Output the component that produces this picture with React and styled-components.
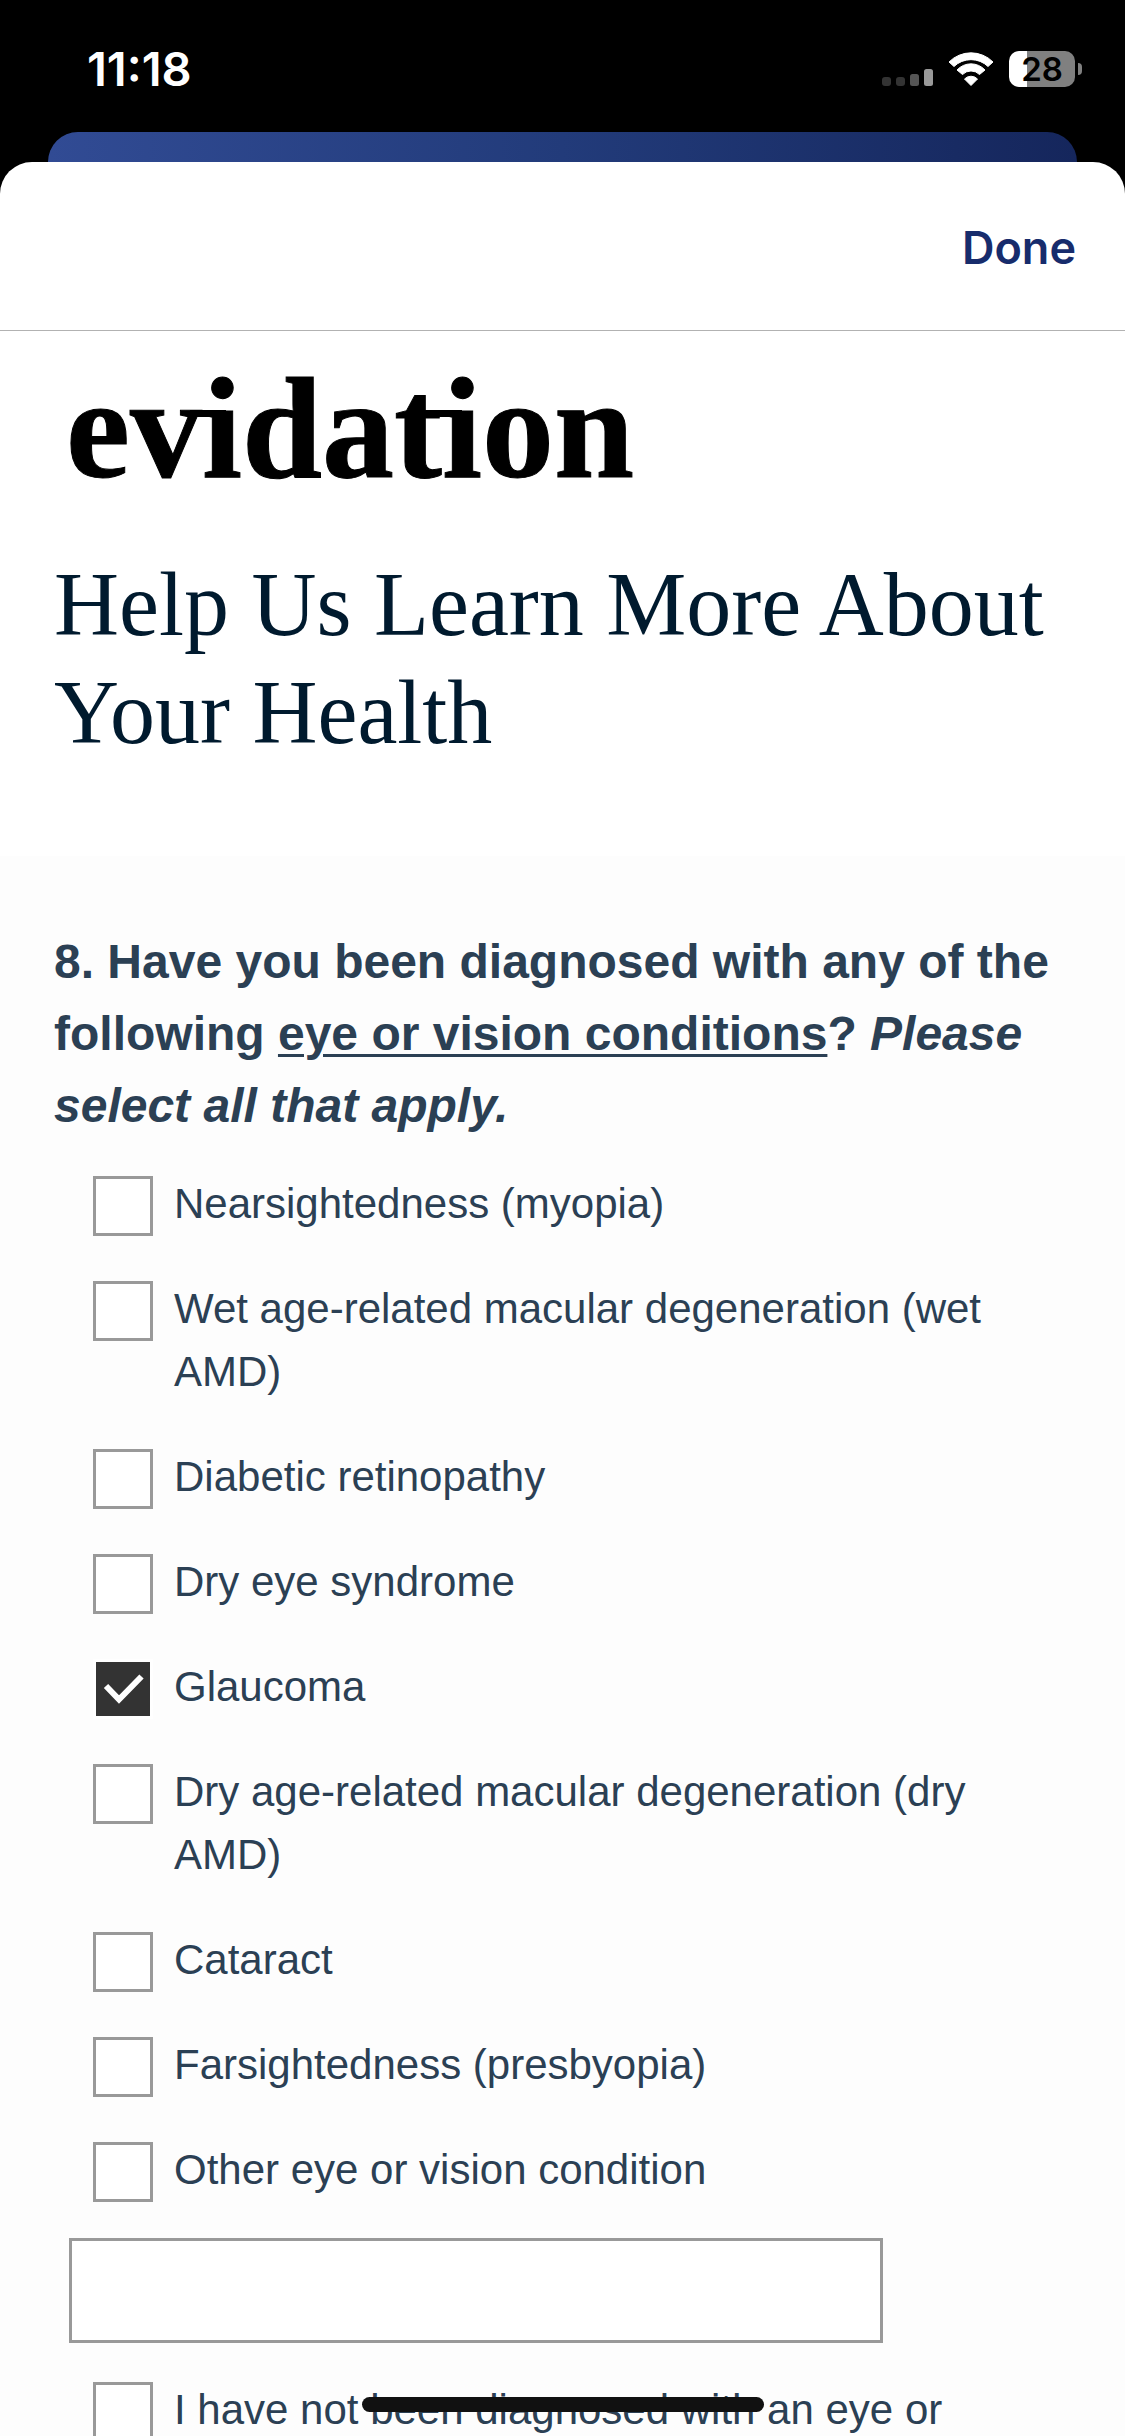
import React, { useState } from "react";
import styled, { createGlobalStyle } from "styled-components";

const SANS = '"Liberation Sans", Arial, sans-serif';
const SERIF = '"Liberation Serif", "Times New Roman", serif';
const SYSTEM = 'Inter, "Liberation Sans", sans-serif';

const GlobalStyle = createGlobalStyle`
  *, *::before, *::after { box-sizing: border-box; }
  body { margin: 0; background: #000; }
`;

const Screen = styled.div`
  position: relative;
  display: flex;
  flex-direction: column;
  height: 100vh;
  overflow: hidden;
  background: #000;
`;

const StatusBar = styled.div`
  display: flex;
  align-items: center;
  justify-content: space-between;
  flex: none;
  height: 132px;
  padding: 6px 43px 0 87px;
  color: #fff;
  font-family: ${SYSTEM};
`;

const Clock = styled.time`
  font-size: 47px;
  line-height: 54px;
  font-weight: 600;
`;

const StatusIcons = styled.div`
  display: flex;
  align-items: center;
  gap: 15px;
`;

const Battery = styled.div`
  display: flex;
  align-items: center;
  gap: 3px;
`;

const BatteryBody = styled.div`
  width: 66px;
  height: 36px;
  border-radius: 10px;
  background: linear-gradient(to right, #fff ${(p) => p.$level}%, #808080 ${(p) => p.$level}%);
  color: #000;
  font-size: 33px;
  line-height: 36px;
  font-weight: 600;
  text-align: center;
`;

const BatteryCap = styled.div`
  width: 4px;
  height: 12px;
  border-radius: 0 4px 4px 0;
  background: #808080;
`;

const BackCard = styled.div`
  flex: none;
  height: 62px;
  margin: 0 48px -32px;
  border-radius: 30px 30px 0 0;
  background: linear-gradient(to right, #314b94, #223b7a 50%, #15265c);
`;

const Sheet = styled.div`
  position: relative;
  display: flex;
  flex-direction: column;
  flex: 1;
  min-height: 0;
  border-radius: 32px 32px 0 0;
  background: #fff;
  overflow: hidden;
`;

const Toolbar = styled.div`
  display: flex;
  align-items: center;
  justify-content: flex-end;
  flex: none;
  height: 169px;
  padding: 4px 49px 0;
  border-bottom: 1px solid #b2b2b2;
`;

const DoneButton = styled.button`
  padding: 0;
  border: 0;
  background: none;
  color: #172c6c;
  font: 600 45px/60px ${SYSTEM};
`;

const Survey = styled.main`
  flex: 1;
  min-height: 0;
  overflow: hidden auto;
  scrollbar-width: none;
`;

const Intro = styled.header`
  padding: 16px 54px 89px;
`;

const Logo = styled.svg`
  display: block;
  margin: 0 0 40px 12px;
  font-family: ${SERIF};
  font-size: 144px;
  font-weight: 700;
`;

const Title = styled.h1`
  margin: 0;
  color: #001a2e;
  font: 400 90px/108px ${SERIF};
`;

const Form = styled.form`
  padding: 70px 54px;
  background: #fdfdfd;
  color: #2b4054;
  font-family: ${SANS};
`;

const Question = styled.fieldset`
  min-width: 0;
  margin: 0;
  padding: 0;
  border: 0;
`;

const Prompt = styled.legend`
  padding: 0;
  margin-bottom: 30px;
  font-size: 48px;
  line-height: 72px;
  font-weight: 700;

  u {
    text-decoration-thickness: 3px;
    text-underline-offset: 4px;
  }
`;

const Options = styled.div`
  display: flex;
  flex-direction: column;
  gap: 42px;
  padding: 0 39px;
`;

const OptionRow = styled.label`
  display: flex;
  align-items: flex-start;
  gap: 21px;
  font-size: 42px;
  line-height: 63px;
`;

const BoxCell = styled.span`
  display: grid;
  flex: none;
  width: 60px;
  height: 60px;
  margin: 4px 0 -1px;

  > * { grid-area: 1 / 1; }
`;

const Box = styled.input`
  appearance: none;
  width: 60px;
  height: 60px;
  margin: 0;
  border: 3px solid #999;
  background: #fff;

  &:checked {
    border-color: #fff;
    background: #333;
  }
`;

const Tick = styled.svg`
  pointer-events: none;
`;

const OtherInput = styled.input`
  display: block;
  width: 80%;
  height: 105px;
  margin: 37px 15px 35px;
  padding: 0 24px;
  border: 3px solid #999;
  border-radius: 0;
  background: #fff;
  color: inherit;
  font: 42px/63px ${SANS};
`;

const HomeIndicator = styled.div`
  position: absolute;
  left: 50%;
  bottom: 24px;
  width: 402px;
  height: 15px;
  margin-left: -201px;
  border-radius: 8px;
  background: #111;
`;

const CONDITIONS = [
  "Nearsightedness (myopia)",
  "Wet age-related macular degeneration (wet AMD)",
  "Diabetic retinopathy",
  "Dry eye syndrome",
  "Glaucoma",
  "Dry age-related macular degeneration (dry AMD)",
  "Cataract",
  "Farsightedness (presbyopia)",
  "Other eye or vision condition",
];
const NONE = "I have not been diagnosed with an eye or";

function Option({ label, checked, onToggle }) {
  return (
    <OptionRow>
      <BoxCell>
        <Box type="checkbox" checked={checked} onChange={() => onToggle(label)} />
        {checked && (
          <Tick width="60" height="60" viewBox="0 0 60 60" fill="none" aria-hidden="true">
            <path d="M13 27 L26 40.5 L48.5 17.5" stroke="#fff" strokeWidth="6" />
          </Tick>
        )}
      </BoxCell>
      <span>{label}</span>
    </OptionRow>
  );
}

function SignalIcon() {
  return (
    <svg width="51" height="34" viewBox="0 0 51 34" aria-hidden="true">
      <rect x="0" y="25" width="9" height="9" rx="3" fill="#333" />
      <rect x="14" y="25" width="9" height="9" rx="3" fill="#333" />
      <rect x="28" y="22" width="9" height="12" rx="2.5" fill="#555" />
      <rect x="42" y="17" width="9" height="17" rx="2.5" fill="#999" />
    </svg>
  );
}

function WifiIcon() {
  return (
    <svg width="46" height="34" viewBox="0 0 46 34" fill="#fff" stroke="#fff" strokeWidth="1" strokeLinejoin="round" aria-hidden="true">
      <path d="M1 10 A31 31 0 0 1 45 10 L40 14.5 A24.5 24.5 0 0 0 6 14.5 Z" />
      <path d="M9 18 A19 19 0 0 1 37 18 L31.5 22.5 A12 12 0 0 0 14.5 22.5 Z" />
      <path d="M16.5 27 A9 9 0 0 1 29.5 27 L23 33.5 Z" />
    </svg>
  );
}

export default function App() {
  const [selected, setSelected] = useState(["Glaucoma"]);
  const toggle = (label) =>
    setSelected((s) => (s.includes(label) ? s.filter((x) => x !== label) : [...s, label]));

  return (
    <>
      <GlobalStyle />
      <Screen>
        <StatusBar>
          <Clock>11:18</Clock>
          <StatusIcons>
            <SignalIcon />
            <WifiIcon />
            <Battery>
              <BatteryBody $level={28}>28</BatteryBody>
              <BatteryCap />
            </Battery>
          </StatusIcons>
        </StatusBar>
        <BackCard />
        <Sheet>
          <Toolbar>
            <DoneButton type="button">Done</DoneButton>
          </Toolbar>
          <Survey>
            <Intro>
              <Logo width="576" height="164" viewBox="0 0 576 164" role="img" aria-label="evidation">
                <text x="0" y="130" stroke="#000" strokeWidth="1">evidation</text>
                <rect x="124" y="63" width="36" height="7" />
                <rect x="352" y="63" width="44" height="7" />
              </Logo>
              <Title>Help Us Learn More About Your Health</Title>
            </Intro>
            <Form>
              <Question>
                <Prompt>
                  8. Have you been diagnosed with any of the following{" "}
                  <u>eye or vision conditions</u>? <em>Please select all that apply.</em>
                </Prompt>
                <Options>
                  {CONDITIONS.map((c) => (
                    <Option key={c} label={c} checked={selected.includes(c)} onToggle={toggle} />
                  ))}
                </Options>
                <OtherInput type="text" aria-label="Other eye or vision condition" />
                <Options>
                  <Option label={NONE} checked={selected.includes(NONE)} onToggle={toggle} />
                </Options>
              </Question>
            </Form>
          </Survey>
        </Sheet>
        <HomeIndicator />
      </Screen>
    </>
  );
}
